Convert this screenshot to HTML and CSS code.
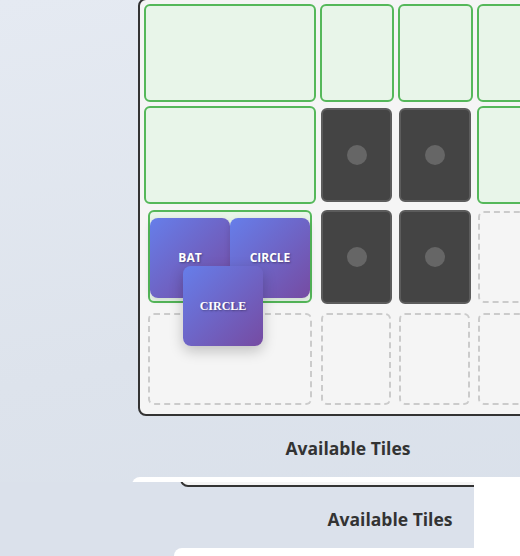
FILE: index.html
```html
<!DOCTYPE html>
<html>
<head>
<meta charset="utf-8">
<link rel="stylesheet" href="styles.css">
</head>
<body>
<div class="scene">
  <div class="board">
    <div class="grid">
      <div class="cell done"></div>
      <div class="cell done"></div>
      <div class="cell done"></div>
      <div class="cell done"></div>

      <div class="cell done"></div>
      <div class="cell filled"><span class="dot"></span></div>
      <div class="cell filled"><span class="dot"></span></div>
      <div class="cell done"></div>

      <div class="cell done target">
        <div class="tile">BAT</div>
        <div class="tile">CIRCLE</div>
      </div>
      <div class="cell filled"><span class="dot"></span></div>
      <div class="cell filled"><span class="dot"></span></div>
      <div class="cell empty"></div>

      <div class="cell empty wide-empty"></div>
      <div class="cell empty"></div>
      <div class="cell empty"></div>
      <div class="cell empty"></div>
    </div>
  </div>
  <h2 class="heading">Available Tiles</h2>
  <div class="panel"></div>
</div>

<div class="ghost">
  <div class="scene shifted">
    <div class="board">
      <div class="grid-space"></div>
    </div>
    <h2 class="heading">Available Tiles</h2>
    <div class="panel"></div>
  </div>
</div>

<div class="tile dragging">CIRCLE</div>
</body>
</html>
```

FILE: styles.css
```css
html, body {
  margin: 0;
  padding: 0;
}
body {
  width: 520px;
  height: 556px;
  overflow: hidden;
  position: relative;
  background: linear-gradient(170deg, #e5eaf2 0%, #dde3ec 60%, #d9e0ea 100%);
  font-family: "Open Sans", "Liberation Sans", sans-serif;
}
.scene {
  width: 432px;
  margin-left: 132px;
  margin-top: -2px;
}
.board {
  margin: 0 6px;
  border: 2px solid #333;
  border-radius: 8px;
  background: #f5f5f5;
  padding: 4px 4px 6px;
}
.grid {
  display: grid;
  grid-template-columns: 172px 74px 75px 75px;
  grid-template-rows: repeat(4, 98px);
  gap: 4px;
}
.grid-space {
  height: 404px;
}
.cell {
  box-sizing: border-box;
  border-radius: 6px;
  position: relative;
}
.done {
  background: #e8f5e9;
  border: 2px solid #55b85a;
}
.filled {
  margin: 2px 2px 2px 1px;
  background: #444;
  border: 2px solid #5c5c5c;
  display: flex;
  align-items: center;
  justify-content: center;
}
.dot {
  width: 20px;
  height: 20px;
  border-radius: 50%;
  background: #666;
}
.empty {
  margin: 3px 3px 3px 1px;
  border: 2px dashed #cbcbcb;
}
.wide-empty {
  margin: 3px 4px 3px 4px;
}
.target {
  margin: 2px 4px 3px 4px;
  display: flex;
  align-items: center;
}
.tile {
  width: 80px;
  height: 80px;
  flex: none;
  border-radius: 8px;
  background: linear-gradient(135deg, #667eea 0%, #764ba2 100%);
  color: #fff;
  font-weight: 700;
  font-size: 12px;
  display: flex;
  align-items: center;
  justify-content: center;
  text-shadow: 1px 1px 2px rgba(0, 0, 0, 0.35);
  box-shadow: 0 2px 6px rgba(0, 0, 0, 0.12);
}
.target .tile {
  margin-top: 2px;
}
.dragging {
  position: absolute;
  left: 183px;
  top: 266px;
  font-family: "Liberation Serif", serif;
  font-size: 12px;
  box-shadow: 0 5px 14px rgba(0, 0, 0, 0.22);
}
.heading {
  margin: 20px 0 17px;
  text-align: center;
  font-size: 17.5px;
  line-height: 24px;
  font-weight: 700;
  color: #333;
}
.panel {
  height: 220px;
  background: #fff;
  border-radius: 8px;
}
.ghost {
  position: absolute;
  left: 0;
  top: 482px;
  width: 474px;
  height: 74px;
  overflow: hidden;
  background: #dbe1eb;
}
.shifted {
  margin-left: 174px;
  margin-top: -413px;
}
```
